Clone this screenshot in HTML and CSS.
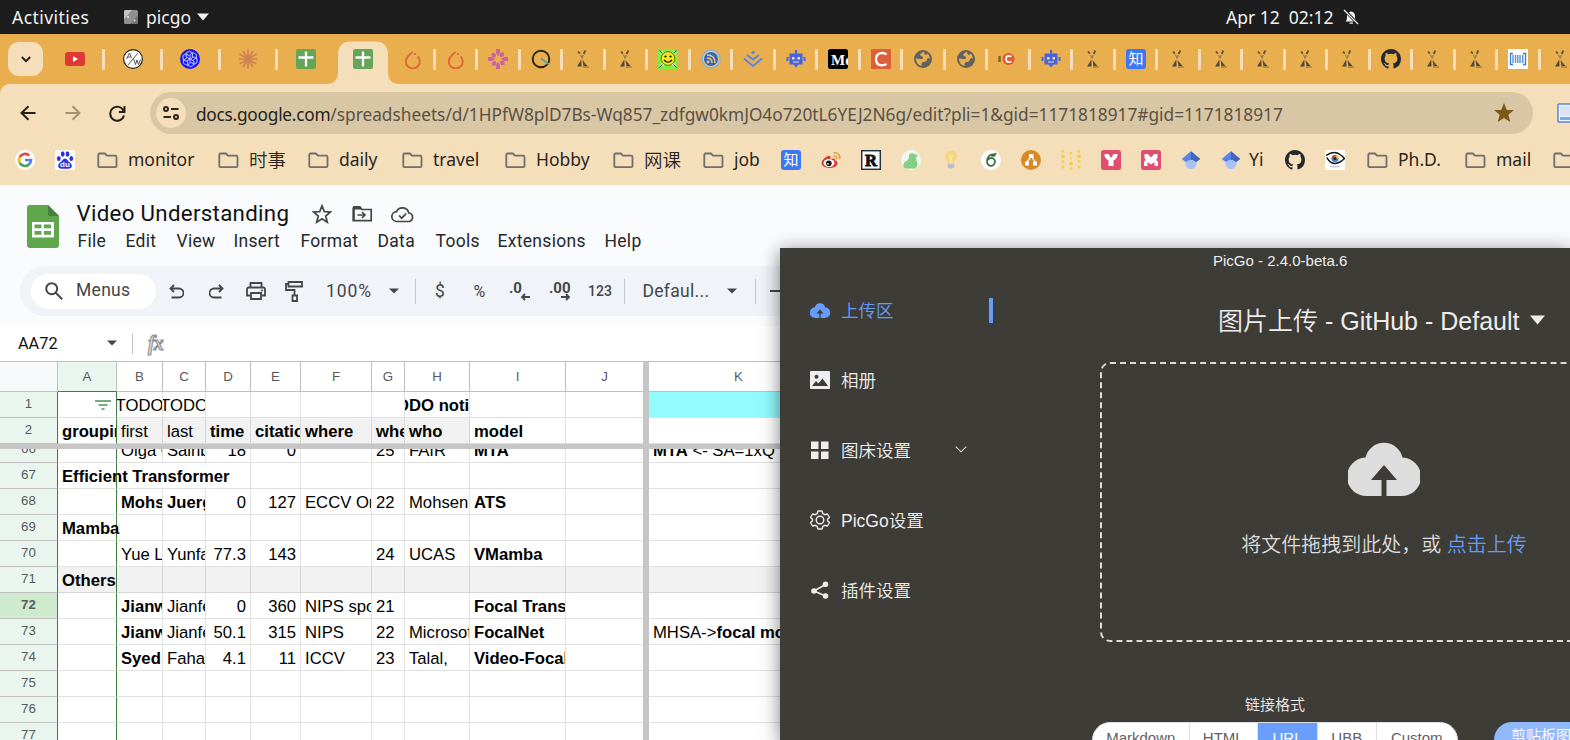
FILE: index.html
```html
<!DOCTYPE html>
<html lang="en">
<head>
<meta charset="utf-8">
<title>Video Understanding - Google Sheets</title>
<link rel="stylesheet" href="styles.css">
</head>
<body>
<svg class="defs" width="0" height="0">
  <symbol id="arxiv" viewBox="0 0 20 20"><path d="M5 2.500l1.800 2.200M12.300 1.500l-1.600 3.500" stroke="#6b5636" stroke-width="1.900"/><path d="M7.500 6l2 3.500M10.300 6l-1.500 3.500" stroke="#8a7650" stroke-width="1.100"/><path d="M8.300 10.500L4 17.500h4.500zM9.500 11l5 6-4 .300z" fill="#4f493e"/><path d="M10 18h6" stroke="#856a3c" stroke-width="1"/></symbol>
  <symbol id="sheet" viewBox="0 0 20 20"><rect width="20" height="20" rx="2" fill="#64a558"/><path d="M10 2.500v15M2.500 8.500h15" stroke="#fff" stroke-width="2.300"/></symbol>
  <symbol id="torch" viewBox="0 0 20 20"><path d="M9.500 2.800L4.800 7.500a7 7 0 1 0 9.900 0" fill="none" stroke="#e0653a" stroke-width="1.900"/><circle cx="12" cy="5" r="1.100" fill="#e0653a"/></symbol>
  <symbol id="globe" viewBox="0 0 20 20"><circle cx="10" cy="10" r="9" fill="#616161"/><path d="M10.500 2.800c-1 1.200-3.500 1.500-3.300 3.200.200 1.500 2.300 1 2.800 2.300.500 1.500-1.300 2.200-3 1.800-1.500-.400-2.500-.700-4-.600a7.200 7.200 0 0 0 5.800 7.600c.200-1.300-.800-2.500.400-3.500 1.500-1.300 4.300-.200 4.600-2.600.200-1.500 1.500-1.800 3.200-1.600-.300-2-1-3.500-2.500-4.900-.500 1.300-2 1.800-2.700 1-.700-.800.400-1.700-1.300-2.700z" fill="#e9af4f"/></symbol>
  <symbol id="robot" viewBox="0 0 20 20"><path d="M9 3V1h2v2zM3.500 4.500h13v11h-4l-2.500 3-2.500-3h-4zM.500 8h2v4h-2zM17.500 8h2v4h-2zM9 3h2v2H9z" fill="#4564e0"/><path d="M6 8h2.500v2.500H6zM11.500 8H14v2.500h-2.500zM7 12.500h6v1H7z" fill="#f6d9a6"/></symbol>
  <symbol id="zhihu" viewBox="0 0 20 20"><rect width="20" height="20" rx="3" fill="#3e77f5"/><text x="10" y="15.200" text-anchor="middle" class="zh">知</text></symbol>
  <symbol id="github" viewBox="0 0 16 16"><path fill="#24292e" d="M8 0C3.580 0 0 3.580 0 8c0 3.540 2.290 6.530 5.470 7.590.400.070.550-.170.550-.380 0-.190-.010-.820-.010-1.490-2.010.370-2.530-.490-2.690-.940-.090-.230-.480-.940-.820-1.130-.280-.150-.680-.520-.010-.530.630-.010 1.080.580 1.230.820.720 1.210 1.870.870 2.330.660.070-.520.280-.870.510-1.070-1.780-.200-3.640-.890-3.640-3.950 0-.870.310-1.590.820-2.150-.080-.200-.360-1.020.080-2.120 0 0 .670-.210 2.200.820a7.600 7.600 0 0 1 4 0c1.530-1.040 2.200-.820 2.200-.820.440 1.100.160 1.920.080 2.120.510.560.820 1.270.820 2.150 0 3.070-1.870 3.750-3.650 3.950.290.250.540.730.540 1.480 0 1.070-.010 1.930-.010 2.200 0 .210.150.460.550.380A8.010 8.010 0 0 0 16 8c0-4.420-3.580-8-8-8z"/></symbol>
  <symbol id="folder" viewBox="0 0 21 17"><path d="M2.500 1.500h5.300l2.200 2.200h8.300q1.200 0 1.200 1.200v9.100q0 1.200-1.200 1.200H2.500q-1.200 0-1.200-1.200V2.700q0-1.200 1.200-1.200z" fill="none" stroke="#6e6e6e" stroke-width="1.800"/></symbol>
  <symbol id="scholar" viewBox="0 0 20 20"><circle cx="10" cy="13.500" r="5.600" fill="#a9c3fa"/><path d="M10 1.300L.800 8.900 5 12q5-4.500 10 0l4.200-3.100z" fill="#5583ec"/><path d="M10 1.300v8.200q3 .200 5 2.500l4.200-3.100z" fill="#4265b8"/></symbol>
  <symbol id="cloudup" viewBox="0 0 72 56"><path fill-rule="evenodd" d="M19 55a19 19 0 0 1-1.500-38.500 19 19 0 0 1 37 0A19 19 0 0 1 53 55H38.500V39H49L36 24 23 39h10.500v16z" fill="currentColor"/></symbol>
  <symbol id="weave" viewBox="0 0 20 20"><rect width="20" height="20" rx="2.500" fill="#e04f6f"/></symbol>
</svg>

<div class="topbar">
  <div class="topbar-left">
    <span class="activities">Activities</span>
    <svg class="app-ic" width="14" height="14"><rect width="14" height="14" rx="1.500" fill="#8f8f8f"/><path d="M0 9L8 0H1.500Q0 0 0 1.500z" fill="#c4c4c4"/><path d="M6 14l8-9v8l-1 1z" fill="#727272"/><circle cx="4" cy="7" r="1" fill="#eee"/><circle cx="10.500" cy="10.500" r="1" fill="#ddd"/></svg>
    <span class="appname">picgo</span>
    <svg width="12" height="8"><path d="M0 .500h12L6 7.500z" fill="#f2f2f2"/></svg>
  </div>
  <span class="clock">Apr 12&nbsp; 02:12</span>
  <svg width="16" height="16" viewBox="0 0 16 16"><path d="M2.500 12.500q1.500-1 1.500-5Q4 3 8 2.500 12 3 12 7.500q0 4 1.500 5zM6.500 13.500h3.500v1.200H6.500z" fill="#f2f2f2"/><path d="M1 .500l14 14.500" stroke="#1d1d1d" stroke-width="3"/><path d="M1 1l14 14" stroke="#f2f2f2" stroke-width="1.300"/></svg>
</div>

<div class="tabstrip">
  <div class="tabsearch"><svg width="10" height="7"><path d="M.800 1l4.200 4.200L9.200 1" fill="none" stroke="#23201a" stroke-width="2"/></svg></div>
  <div class="tab wide"><svg width="20" height="20"><rect y="3" width="20" height="14" rx="3" fill="#dd3835"/><path d="M8 7l5 3-5 3z" fill="#fff"/></svg></div>
  <div class="tab wide"><svg width="20" height="20"><circle cx="10" cy="10" r="9.400" fill="#fff" stroke="#222" stroke-width="1.200"/><path d="M3.500 10l3-6 2 5M4.500 8h3M5 16L14.500 4.500M10.500 9.500l2 6 1.500-4.500 1.500 4.500 2-5" fill="none" stroke="#444" stroke-width=".9"/></svg></div>
  <div class="tab wide"><svg width="20" height="20"><circle cx="10" cy="10" r="10" fill="#1515f5"/><g fill="none" stroke="#dfe3ff" stroke-width=".8"><path id="petal" d="M10 10V5.500l3.200-1.800 3.300 2V9L13 11"/><use href="#petal" transform="rotate(60 10 10)"/><use href="#petal" transform="rotate(120 10 10)"/><use href="#petal" transform="rotate(180 10 10)"/><use href="#petal" transform="rotate(240 10 10)"/><use href="#petal" transform="rotate(300 10 10)"/></g></svg></div>
  <div class="tab wide"><svg width="20" height="20"><g stroke="#d08152" stroke-width="1.700"><path d="M10 .500v19M.500 10h19M5 2l10 16M15 2L5 18M1.500 5l17 10M18.500 5l-17 10"/></g></svg></div>
  <div class="tab wide plain"><svg width="20" height="20"><use href="#sheet"/></svg></div>
  <div class="tab active"><svg class="flare" width="74" height="43" viewBox="0 0 74 43"><path d="M0 43Q12 43 12 31V14Q12 .500 25 .500H49Q62 .500 62 14V31Q62 43 74 43z" fill="#f5dfba"/></svg><svg class="fav" width="20" height="20"><use href="#sheet"/></svg></div>
  <div class="tab"><svg width="20" height="20"><use href="#torch"/></svg></div>
  <div class="tab"><svg width="20" height="20"><use href="#torch"/></svg></div>
  <div class="tab"><svg width="20" height="20"><path id="arm" d="M8 0h4v4l-2 3.200L8 4zM12.500 3.500h3.500v3.500l-3 1.200-1.700-1.700z" fill="#cb63a0"/><use href="#arm" transform="rotate(90 10 10)"/><use href="#arm" transform="rotate(180 10 10)"/><use href="#arm" transform="rotate(270 10 10)"/></svg></div>
  <div class="tab"><svg width="20" height="20"><circle cx="10" cy="10" r="8.300" fill="none" stroke="#2b2418" stroke-width="1.900"/><path d="M10 9.500l8 6" stroke="#57a99a" stroke-width="1.800"/></svg></div>
  <div class="tab"><svg width="20" height="20"><use href="#arxiv"/></svg></div>
  <div class="tab"><svg width="20" height="20"><use href="#arxiv"/></svg></div>
  <div class="tab"><svg width="20" height="20"><rect width="20" height="20" fill="#7df03a"/><path d="M3 3l14 14M17 3L3 17" stroke="#e8f5d8" stroke-width="2.500"/><path d="M1.500 1.500l3 3M18.500 1.500l-3 3M1.500 18.500l3-3M18.500 18.500l-3-3" stroke="#333" stroke-width="1"/><circle cx="10" cy="9.500" r="6.800" fill="#fbe61c" stroke="#4a5a10" stroke-width=".8"/><circle cx="7.500" cy="7.500" r="1.100" fill="#111"/><circle cx="12.500" cy="7.500" r="1.100" fill="#111"/><path d="M6 11q4 4.500 8 0" fill="none" stroke="#111" stroke-width="1.200"/></svg></div>
  <div class="tab"><svg width="20" height="20"><circle cx="10" cy="10" r="9" fill="#ecc684" stroke="#8ab4cf" stroke-width="1.600"/><circle cx="10" cy="10" r="7" fill="#3267b8"/><path d="M6 9q5 0 5 5M6 6q8 0 8 8" fill="none" stroke="#f0c47a" stroke-width="1.500"/><circle cx="7" cy="13" r="1.400" fill="#f0c47a"/></svg></div>
  <div class="tab"><svg width="20" height="20"><path d="M10 1.500l2.200 1.900-2.200 1.900-2.200-1.900z" fill="#5d84e0"/><path d="M4 6l6 4.500L16 6M1 9.500l9 7.500 9-7.500" fill="none" stroke="#5d84e0" stroke-width="2"/></svg></div>
  <div class="tab"><svg width="20" height="20"><use href="#robot"/></svg></div>
  <div class="tab"><svg width="20" height="20"><rect width="20" height="20" rx="2.500" fill="#000"/><text x="3" y="15.500" class="med">Me</text></svg></div>
  <div class="tab"><svg width="20" height="20"><rect width="20" height="20" fill="#dd603b"/><path d="M15.500 5.500Q13.500 3.800 11 3.800 5 4.300 5 10.200 5 16.200 11 16.300q2.500 0 4.500-1.500" fill="none" stroke="#fff" stroke-width="2.300"/></svg></div>
  <div class="tab"><svg width="20" height="20"><use href="#globe"/></svg></div>
  <div class="tab"><svg width="20" height="20"><use href="#globe"/></svg></div>
  <div class="tab"><svg width="20" height="20"><path d="M1.500 7v6" stroke="#8a6420" stroke-width="2.500"/><circle cx="10.500" cy="10" r="6" fill="#de5b38"/><path d="M13.500 7.500Q8 5.500 8 10t5.500 2.500" fill="none" stroke="#fff" stroke-width="1.700"/></svg></div>
  <div class="tab"><svg width="20" height="20"><use href="#robot"/></svg></div>
  <div class="tab"><svg width="20" height="20"><use href="#arxiv"/></svg></div>
  <div class="tab"><svg width="20" height="20"><use href="#zhihu"/></svg></div>
  <div class="tab"><svg width="20" height="20"><use href="#arxiv"/></svg></div>
  <div class="tab"><svg width="20" height="20"><use href="#arxiv"/></svg></div>
  <div class="tab"><svg width="20" height="20"><use href="#arxiv"/></svg></div>
  <div class="tab"><svg width="20" height="20"><use href="#arxiv"/></svg></div>
  <div class="tab"><svg width="20" height="20"><use href="#arxiv"/></svg></div>
  <div class="tab"><svg width="20" height="20"><use href="#github"/></svg></div>
  <div class="tab"><svg width="20" height="20"><use href="#arxiv"/></svg></div>
  <div class="tab"><svg width="20" height="20"><use href="#arxiv"/></svg></div>
  <div class="tab"><svg width="20" height="20"><rect width="20" height="20" fill="#fff"/><path d="M5 4.500H2.500v11H5M15 4.500h2.500v11H15" fill="none" stroke="#3b78d8" stroke-width="1.300"/><path d="M5 6v8M7.500 6v8M9.700 6v8M12 6v8M14.700 6v8" stroke="#5b8fe0" stroke-width="1.400"/></svg></div>
  <div class="tab"><svg width="20" height="20"><use href="#arxiv"/></svg></div>
</div>

<div class="chrome">
  <div class="navbar">
    <svg class="nav" width="16" height="16"><path d="M15.500 8H2M8.500 1.200L1.500 8l7 6.800" fill="none" stroke="#24211c" stroke-width="2"/></svg>
    <svg class="nav fwd" width="16" height="16"><path d="M.500 8H14M7.500 1.200L14.500 8l-7 6.800" fill="none" stroke="#a09177" stroke-width="2"/></svg>
    <svg class="nav rel" width="17" height="17"><path d="M14.700 6A7 7 0 1 0 15 10.500M15.500 1v6H9.800" fill="none" stroke="#24211c" stroke-width="2"/></svg>
    <div class="omnibox">
      <div class="siteinfo"><svg width="16" height="14"><g fill="none" stroke="#2b2620" stroke-width="2"><circle cx="3" cy="3" r="2"/><path d="M8 3h7.500M.500 11H8"/><circle cx="13" cy="11" r="2"/></g></svg></div>
      <div class="url"><b>docs.google.com</b>/spreadsheets/d/1HPfW8plD7Bs-Wq857_zdfgw0kmJO4o720tL6YEJ2N6g/edit?pli=1&amp;gid=1171818917#gid=1171818917</div>
      <svg class="star" width="20" height="20" viewBox="0 0 20 20"><path d="M10 0l2.800 7h7.200l-5.700 4.700 2 7.300L10 15l-6.300 4 2-7.300L0 7h7.200z" fill="#7d5714"/></svg>
    </div>
    <svg class="ext" width="20" height="20"><rect x="1" y="1" width="24" height="18" rx="1" fill="#f2f6fd" stroke="#5a86cc" stroke-width="1.500"/><path d="M3 3h17v10H3z" fill="#d7e4f8"/><path d="M3 14h17v3H3z" fill="#6fb0ea"/></svg>
  </div>
  <div class="bookmarks">
    <div class="bm w40"><svg width="20" height="20"><circle cx="10" cy="10" r="10" fill="#fff"/><g fill="none" stroke-width="2.700"><path d="M14.200 5.600A6 6 0 0 0 4.800 7" stroke="#dc4a3d"/><path d="M4.800 7a6 6 0 0 0 0 6" stroke="#f0b92c"/><path d="M4.800 13a6 6 0 0 0 9 1.600" stroke="#4ba35a"/><path d="M13.800 14.600A6 6 0 0 0 16 10h-6" stroke="#4c83ea"/></g></svg></div>
    <div class="bm w40"><svg width="20" height="20"><rect width="20" height="20" rx="1.500" fill="#fff"/><g fill="#2b33dc"><ellipse cx="3.800" cy="8.500" rx="1.900" ry="2.500"/><ellipse cx="7.700" cy="4" rx="1.900" ry="2.700"/><ellipse cx="12.500" cy="4" rx="1.900" ry="2.700"/><ellipse cx="16.300" cy="8.500" rx="1.900" ry="2.500"/><path d="M10 8.500q2 0 3.500 3 3.500 2.200 3.300 4.500-.300 2.700-3.300 2.700H6.500q-3 0-3.300-2.700Q3 13.700 6.500 11.500 8 8.500 10 8.500z"/></g><text x="10" y="17.200" text-anchor="middle" class="du">du</text></svg></div>
    <div class="bm f" style="width:121px"><svg width="21" height="17"><use href="#folder"/></svg><span>monitor</span></div>
    <div class="bm f cn" style="width:90px"><svg width="21" height="17"><use href="#folder"/></svg><span>时事</span></div>
    <div class="bm f" style="width:94px"><svg width="21" height="17"><use href="#folder"/></svg><span>daily</span></div>
    <div class="bm f" style="width:103px"><svg width="21" height="17"><use href="#folder"/></svg><span>travel</span></div>
    <div class="bm f" style="width:108px"><svg width="21" height="17"><use href="#folder"/></svg><span>Hobby</span></div>
    <div class="bm f cn" style="width:90px"><svg width="21" height="17"><use href="#folder"/></svg><span>网课</span></div>
    <div class="bm f" style="width:80px"><svg width="21" height="17"><use href="#folder"/></svg><span>job</span></div>
    <div class="bm w40"><svg width="20" height="20"><use href="#zhihu"/></svg></div>
    <div class="bm w40"><svg width="20" height="20"><path d="M7 6Q1 9 .500 13q.300 4.500 8 5 8-.500 8-5-.200-2-2.500-2.800.800-2.700-4.500-1.200Q10 5 7 6z" fill="#d8382f"/><ellipse cx="8" cy="13" rx="5.500" ry="4" fill="#fff"/><circle cx="7.800" cy="13.200" r="2.800" fill="#111"/><circle cx="7" cy="13.800" r=".9" fill="#fff"/><path d="M12.500 6q3.500-.500 3 3.500M12.500 2.800q7-.500 6.300 6.500" fill="none" stroke="#e89a2b" stroke-width="1.500"/></svg></div>
    <div class="bm w40"><svg width="20" height="20"><rect x=".7" y=".7" width="18.600" height="18.600" fill="#f7f8fa" stroke="#1e3038" stroke-width="1.400"/><text x="10" y="16" text-anchor="middle" class="rr">R</text></svg></div>
    <div class="bm w40"><svg width="20" height="20"><circle cx="10" cy="10" r="10" fill="#eef7f0"/><path d="M8 4.500q3.500-2.500 6 0l3 .500-2 2.500q0 2.500 1 4.500 1.500 4-2 6.500H5q-3-1-2.500-4 .5-3 3-3.500 3-1.500 2.500-6.500z" fill="#85cf83"/></svg></div>
    <div class="bm w40"><svg width="20" height="20"><circle cx="10" cy="6.500" r="6" fill="#f3d583"/><path d="M6.500 10h7l-.7 4H7.200z" fill="#f3d583"/><path d="M7.500 5l2.500 3 2.500-3M10 8v5" fill="none" stroke="#fff3cd" stroke-width="1"/><path d="M6.700 14h6.600v3.500q-3.300 2-6.600 0z" fill="#b9bec6"/></svg></div>
    <div class="bm w40"><svg width="20" height="20"><circle cx="10" cy="10" r="10" fill="#fff"/><path d="M15.500 3.500q-2.500 1-5 1Q6 6.500 6 11.500a4 4 0 1 0 4.200-3.700Q7.500 8 6.300 10.500M10 5q1 1.500 4.500.500" fill="none" stroke="#3b6b42" stroke-width="1.700"/></svg></div>
    <div class="bm w40"><svg width="20" height="20"><circle cx="10" cy="10" r="10" fill="#d98a26"/><path d="M8 4h4.500v4H8zM4 11.500h4v4H4zM12 11.500h4v4h-4z" fill="#fff"/><path d="M9 8l-3 4M11.500 8l2.700 4" stroke="#fff" stroke-width="1.300"/></svg></div>
    <div class="bm w40"><svg width="20" height="20"><g fill="#f3cf4c"><circle cx="2" cy="1.500" r="1.400"/><circle cx="2" cy="6.500" r="2"/><circle cx="2" cy="11.500" r="1.400"/><circle cx="2" cy="17" r="1.500"/><circle cx="10" cy="3.500" r="1.400"/><circle cx="10" cy="8.500" r="1.200"/><circle cx="10" cy="13.500" r="2"/><circle cx="10" cy="18.500" r="1.300"/><circle cx="18" cy="1.500" r="1.400"/><circle cx="18" cy="6.500" r="2"/><circle cx="18" cy="11.500" r="1.400"/><circle cx="18" cy="17" r="1.500"/></g></svg></div>
    <div class="bm w40"><svg width="20" height="20"><use href="#weave"/><path d="M3.500 4h4l2.500 4 2.500-4h4q.5 4-4 6.500V16h-5v-5.500Q3 8 3.500 4z" fill="#fff"/></svg></div>
    <div class="bm w40"><svg width="20" height="20"><use href="#weave"/><path d="M3.500 4h3.300L10 7.500 13.200 4h3.300v3.500q0 1.800-1.700 2.500 2.200.5 2.200 2.500V16h-3.500v-4L10 14.500 6.500 12v4H3v-3.500Q3 10.500 5.200 10 3.500 9.300 3.500 7.500z" fill="#fff"/></svg></div>
    <div class="bm w40"><svg width="20" height="20"><use href="#scholar"/></svg></div>
    <div class="bm yi" style="width:64px"><svg width="20" height="20"><use href="#scholar"/></svg><span>Yi</span></div>
    <div class="bm w40"><svg width="20" height="20"><use href="#github"/></svg></div>
    <div class="bm w40"><svg width="20" height="20"><rect width="20" height="20" fill="#fff"/><ellipse cx="10" cy="16.500" rx="6" ry="1" fill="#cfd0dc"/><path d="M1 5.500Q9 0 15 4.500q3 2 4.500 4Q15 13 10 13.500 4 13 2 7.500" fill="none" stroke="#111" stroke-width="1.500"/><circle cx="10" cy="8.500" r="3.600" fill="#3f7fd0"/><path d="M10 8.500L7 6.500a3.600 3.600 0 0 1 4-1.500z" fill="#e0482c"/><path d="M10 8.500l1-3.500a3.600 3.600 0 0 1 2.500 4z" fill="#f2c029"/><circle cx="10" cy="8.500" r="1.500" fill="#222"/></svg></div>
    <div class="bm f" style="width:98px"><svg width="21" height="17"><use href="#folder"/></svg><span>Ph.D.</span></div>
    <div class="bm f" style="width:88px"><svg width="21" height="17"><use href="#folder"/></svg><span>mail</span></div>
    <div class="bm f" style="width:40px"><svg width="21" height="17"><use href="#folder"/></svg></div>
  </div>
</div>

<div class="docs">
  <div class="dochead">
    <svg class="logo" width="32" height="43"><path d="M3 0h18l11 11v29q0 3-3 3H3q-3 0-3-3V3q0-3 3-3z" fill="#5fa64c"/><path d="M21 0l11 11H23q-2 0-2-2z" fill="#46803a"/><path fill-rule="evenodd" d="M5 17h22v15.500H5zM7.500 19.500v3.800h7v-3.800zM17 19.500v3.800h7v-3.800zM7.500 26v3.800h7V26zM17 26v3.800h7V26z" fill="#fff"/></svg>
    <div class="headtext">
      <div class="titlerow">
        <span class="title">Video Understanding</span>
        <svg class="t1" width="20" height="20" viewBox="0 0 20 20"><path d="M10 1.800l2.300 5.800 6.100.400-4.700 4 1.600 6.200L10 14.700l-5.300 3.500 1.600-6.200-4.700-4 6.100-.400z" fill="none" stroke="#444746" stroke-width="1.700"/></svg>
        <svg class="t2" width="21" height="16"><path d="M2 14V1.200h6L10 3.500h9.200V14.700H1.200V1.500" fill="none" stroke="#444746" stroke-width="1.700"/><path d="M1 0h7l2 3.500H1z" fill="#444746"/><path d="M5.500 9h7M10 6l3 3-3 3" fill="none" stroke="#444746" stroke-width="1.700"/></svg>
        <svg class="t3" width="24" height="17"><path d="M6 15.500a4.900 4.900 0 0 1-.500-9.800A6.500 6.500 0 0 1 17.800 7 4.300 4.300 0 0 1 18 15.500z" fill="none" stroke="#444746" stroke-width="1.700"/><path d="M8 9.500l2.700 2.700 4.600-4.700" fill="none" stroke="#444746" stroke-width="1.700"/></svg>
      </div>
      <div class="menurow"><span style="width:48px">File</span><span style="width:51px">Edit</span><span style="width:57px">View</span><span style="width:67px">Insert</span><span style="width:77px">Format</span><span style="width:58px">Data</span><span style="width:62px">Tools</span><span style="width:107px">Extensions</span><span>Help</span></div>
    </div>
  </div>
  <div class="tools">
    <div class="search"><svg width="18" height="18"><circle cx="6.700" cy="6.700" r="5.500" fill="none" stroke="#444746" stroke-width="2"/><path d="M10.700 10.700l6.500 6.500" stroke="#444746" stroke-width="2"/></svg><span>Menus</span></div>
    <svg style="margin-left:13px" width="15" height="15"><path d="M5 1L1.500 4.500 5 8M2 4.500h8a4.500 4.500 0 0 1 0 9H2.500" fill="none" stroke="#444746" stroke-width="1.800"/></svg>
    <svg style="margin-left:25px" width="15" height="15"><path d="M10 1l3.500 3.500L10 8M13 4.500H5a4.500 4.500 0 0 0 0 9h7.500" fill="none" stroke="#444746" stroke-width="1.800"/></svg>
    <svg style="margin-left:22px" width="20" height="18"><path d="M4.500 5V1h11v4M4 13.500H1V7.500Q1 5.500 3 5.500h14q2 0 2 2v6h-3M5 11h10v6H5z" fill="none" stroke="#444746" stroke-width="1.800"/><circle cx="16" cy="8.500" r="1" fill="#444746"/></svg>
    <svg style="margin-left:19px" width="18" height="21"><path d="M3.500 1h13.500v4.500H3.500zM3.500 3H1v6h8.500v6M7.500 14.500h4.500v5.500H7.500z" fill="none" stroke="#444746" stroke-width="1.800"/></svg>
    <span class="zoom">100%</span><svg class="caret" width="10" height="6"><path d="M0 .500h10L5 5.500z" fill="#444746"/></svg>
    <i class="sep" style="margin-left:16px"></i>
    <span class="cur">$</span><span class="pct">%</span>
    <svg style="margin-left:21px" width="21" height="21"><text x="-1" y="12" class="dec">.0</text><path d="M20 16h-8M15 13l-3 3 3 3" fill="none" stroke="#444746" stroke-width="1.800"/></svg>
    <svg style="margin-left:19px" width="22" height="21"><text x="-1" y="12" class="dec">.00</text><path d="M11 16h8M16 13l3 3-3 3" fill="none" stroke="#444746" stroke-width="1.800"/></svg>
    <span class="n123">123</span>
    <i class="sep"></i>
    <span class="font">Defaul...</span><svg width="10" height="6"><path d="M0 .500h10L5 5.500z" fill="#444746"/></svg>
    <i class="sep" style="margin-left:18px"></i>
    <svg style="margin-left:14px" width="15" height="2"><path d="M0 1h15" stroke="#444746" stroke-width="2"/></svg>
  </div>
  <div class="fxbar">
    <span class="ref">AA72</span><svg width="10" height="6"><path d="M0 .500h10L5 5.500z" fill="#444746"/></svg><i class="sep2"></i><span class="fx">fx</span>
  </div>
  <div class="sheet">
    <div class="row head"><s class="corner"></s><s class="sel">A</s><s>B</s><s>C</s><s>D</s><s>E</s><s>F</s><s>G</s><s>H</s><s>I</s><s class="j">J</s><s class="bar"></s><s>K</s></div>
    <div class="row top"><s class="n">1</s><s class="a filt"><svg width="16" height="10"><path d="M0 1h16M3.500 5h9M6.500 9h3" stroke="#4f9154" stroke-width="1.500"/></svg></s><s class="c">TODO</s><s class="c">TODO</s><s></s><s></s><s></s><s></s><s class="c b">TODO notice</s><s></s><s class="j"></s><s class="bar"></s><s class="cyan"></s></div>
    <div class="row hd2"><s class="n">2</s><s class="a b">grouping</s><s class="g">first</s><s class="g">last</s><s class="g b">time</s><s class="g b">citation</s><s class="g b">where</s><s class="g b">when</s><s class="g b">who</s><s class="b">model</s><s class="j"></s><s class="bar"></s><s></s></div>
    <div class="freeze"></div>
    <div class="row part"><s class="n">66</s><s class="a"></s><s>Olga O</s><s>Sainbayar</s><s class="r">18</s><s class="r">0</s><s></s><s>25</s><s>FAIR</s><s class="b">MTA</s><s class="j"></s><s class="bar"></s><s><b>MTA</b> &lt;- SA=1xQ + V</s></div>
    <div class="row"><s class="n">67</s><s class="a b over">Efficient Transformer</s><s class="nb"></s><s class="nb"></s><s></s><s></s><s></s><s></s><s></s><s></s><s class="j"></s><s class="bar"></s><s></s></div>
    <div class="row"><s class="n">68</s><s class="a"></s><s class="b">Mohsen</s><s class="b">Juergen</s><s class="r">0</s><s class="r">127</s><s>ECCV Oral</s><s>22</s><s>Mohsen</s><s class="b">ATS</s><s class="j"></s><s class="bar"></s><s></s></div>
    <div class="row"><s class="n">69</s><s class="a b over">Mamba</s><s></s><s></s><s></s><s></s><s></s><s></s><s></s><s></s><s class="j"></s><s class="bar"></s><s></s></div>
    <div class="row"><s class="n">70</s><s class="a"></s><s>Yue Liu</s><s>Yunfan</s><s class="r">77.3</s><s class="r">143</s><s></s><s>24</s><s>UCAS</s><s class="b">VMamba</s><s class="j"></s><s class="bar"></s><s></s></div>
    <div class="row gray"><s class="n">71</s><s class="a b">Others</s><s></s><s></s><s></s><s></s><s></s><s></s><s></s><s></s><s class="j"></s><s class="bar"></s><s></s></div>
    <div class="row"><s class="n cur72">72</s><s class="a"></s><s class="b">Jianwei</s><s>Jianfeng</s><s class="r">0</s><s class="r">360</s><s>NIPS spotlight</s><s>21</s><s></s><s class="b">Focal Transformer</s><s class="j"></s><s class="bar"></s><s></s></div>
    <div class="row"><s class="n">73</s><s class="a"></s><s class="b">Jianwei</s><s>Jianfeng</s><s class="r">50.1</s><s class="r">315</s><s>NIPS</s><s>22</s><s>Microsoft</s><s class="b">FocalNet</s><s class="j"></s><s class="bar"></s><s>MHSA-&gt;<b>focal modulation</b></s></div>
    <div class="row"><s class="n">74</s><s class="a"></s><s class="b">Syed</s><s>Fahad</s><s class="r">4.1</s><s class="r">11</s><s>ICCV</s><s>23</s><s>Talal,</s><s class="b">Video-FocalNet</s><s class="j"></s><s class="bar"></s><s></s></div>
    <div class="row"><s class="n">75</s><s class="a"></s><s></s><s></s><s></s><s></s><s></s><s></s><s></s><s></s><s class="j"></s><s class="bar"></s><s></s></div>
    <div class="row"><s class="n">76</s><s class="a"></s><s></s><s></s><s></s><s></s><s></s><s></s><s></s><s></s><s class="j"></s><s class="bar"></s><s></s></div>
    <div class="row"><s class="n">77</s><s class="a"></s><s></s><s></s><s></s><s></s><s></s><s></s><s></s><s></s><s class="j"></s><s class="bar"></s><s></s></div>
  </div>
</div>

<div class="picgo">
  <div class="pg-title">PicGo - 2.4.0-beta.6</div>
  <div class="pg-body">
    <div class="pg-menu">
      <div class="mi on"><svg width="20" height="20" viewBox="0 0 20 20"><svg y="2.500" width="20" height="16"><use href="#cloudup"/></svg></svg><span>上传区</span><i></i></div>
      <div class="mi"><svg width="20" height="20"><path fill-rule="evenodd" d="M1 1h18q1 0 1 1v16q0 1-1 1H1q-1 0-1-1V2q0-1 1-1zM2 16h16l-5.500-7.500-4 5L6 11zM6.500 4.700a2 2 0 1 0 .01 0z" fill="#eee"/></svg><span>相册</span></div>
      <div class="mi"><svg width="20" height="20"><path d="M1 1.500h7.500V9H1zM11 1.500h7.500V9H11zM1 11.500h7.500V19H1zM11 11.500h7.500V19H11z" fill="#eee"/></svg><span>图床设置</span><svg class="chev" width="12" height="7"><path d="M.700.700L6 5.800 11.300.700" fill="none" stroke="#ddd" stroke-width="1.100"/></svg></div>
      <div class="mi"><svg width="20" height="20"><path d="M8 1h4l.8 2.600 2 1.100L17.500 4l2 3.500-2 1.700v1.600l2 1.700-2 3.500-2.700-.700-2 1.100L12 19H8l-.8-2.600-2-1.100L2.500 16l-2-3.500 2-1.700V9.200l-2-1.700 2-3.500 2.700.700 2-1.100z" fill="none" stroke="#eee" stroke-width="1.400" stroke-linejoin="round"/><circle cx="10" cy="10" r="3.800" fill="none" stroke="#eee" stroke-width="1.400"/></svg><span>PicGo设置</span></div>
      <div class="mi"><svg width="20" height="20"><path d="M4 11L15.500 4.500M4 11l11.500 5" stroke="#eee" stroke-width="1.500"/><g fill="#eee"><circle cx="4" cy="11" r="2.800"/><circle cx="15.500" cy="4.200" r="2.800"/><circle cx="15.500" cy="16" r="2.800"/></g></svg><span>插件设置</span></div>
    </div>
    <div class="pg-main">
      <div class="pg-h"><span>图片上传 - GitHub - Default</span><svg width="15" height="10"><path d="M0 .500h15L7.500 9.500z" fill="#eee"/></svg></div>
      <div class="drop">
        <svg width="72" height="56"><use href="#cloudup"/></svg>
        <div class="hint">将文件拖拽到此处，或 <em>点击上传</em></div>
      </div>
      <div class="fmt">链接格式</div>
      <div class="btns"><div class="seg"><span style="width:96.500px">Markdown</span><span style="width:68.500px">HTML</span><span class="act" style="width:60px">URL</span><span style="width:58.500px">UBB</span><span style="width:81.500px">Custom</span></div><div class="clip">剪贴板图片</div></div>
    </div>
  </div>
</div>
</body>
</html>
```
FILE: styles.css
```css
* { box-sizing: border-box; }
body { margin: 0; width: 1570px; height: 740px; overflow: hidden; position: relative; background: #f9fbfd; }
svg { display: block; flex: none; }
.defs { position: absolute; }
span { white-space: nowrap; flex: none; }

.topbar { height: 34px; background: #1d1d1d; color: #f2f2f2; display: flex; align-items: center; font: 17.5px "Noto Sans", sans-serif; border-bottom: 1px solid #161616; }
.topbar-left { width: 1226px; padding-left: 12px; display: flex; align-items: center; }
.activities { width: 112px; letter-spacing: .45px; }
.appname { width: 51px; margin-left: 8px; }
.clock { width: 117px; }

.tabstrip { height: 50px; background: #e9af4f; display: flex; align-items: center; overflow: hidden; padding-left: 8px; }
.tabsearch { width: 35px; height: 34px; margin-right: 3px; border-radius: 11px; background: #f5dfba; display: flex; align-items: center; justify-content: center; flex: none; }
.tab { width: 42.500px; height: 50px; flex: none; display: flex; align-items: center; justify-content: center; position: relative; }
.tab::after { content: ""; position: absolute; right: -1.500px; top: 15px; width: 3px; height: 21px; border-radius: 1px; background: #f5dfba; }
.tab.wide { width: 57.700px; }
.tab.plain::after, .tab.active::after { display: none; }
.tab.active { width: 57.500px; z-index: 1; }
.flare { position: absolute; left: -8.500px; top: 7px; }
.fav { position: relative; }
.zh { font: 15px "Noto Sans CJK SC", sans-serif; fill: #fff; }
.med { font: bold 15px "Liberation Serif", serif; fill: #fff; }
.du { font: bold 8px "Liberation Sans", sans-serif; fill: #fff; }
.rr { font: bold 16.500px "Liberation Serif", serif; fill: #111; stroke: #111; stroke-width: .8px; }

.chrome { height: 101px; background: radial-gradient(circle at 10px 10px, #f5dfba 9.500px, #e9af4f 10.500px) 0 0 / 10px 10px no-repeat #f5dfba; }
.navbar { display: flex; align-items: center; height: 58px; padding-left: 20px; overflow: hidden; }
.fwd { margin-left: 28.500px; }
.rel { margin-left: 28.500px; }
.omnibox { margin-left: 24px; width: 1383px; height: 42px; border-radius: 21px; background: #d8c6a5; display: flex; align-items: center; flex: none; }
.siteinfo { width: 30px; height: 30px; border-radius: 50%; background: #f5dfba; margin-left: 6px; display: flex; align-items: center; justify-content: center; }
.url { margin-left: 10px; padding-top: 2px; width: 1297px; font: 17.280px "Noto Sans", sans-serif; color: #5a5143; white-space: nowrap; flex: none; }
.url b { font-weight: normal; color: #241f18; letter-spacing: -.25px; }
.ext { margin-left: 24px; }
.star { margin-left: 1px; }
.bookmarks { display: flex; height: 36px; align-items: center; padding-left: 15px; font: 17.500px "Noto Sans", "Noto Sans CJK SC", sans-serif; color: #29251e; overflow: hidden; }
.bookmarks span { margin-top: -2px; }
.bm { display: flex; align-items: center; flex: none; }
.w40 { width: 40px; }
.f svg { margin-left: 2px; margin-right: 10px; }
.yi svg { margin-right: 8px; }
.cn { font: 18.500px "Noto Sans CJK SC", sans-serif; font-weight: 350; }

.docs { height: 555px; overflow: hidden; }
.dochead { display: flex; height: 81px; padding: 20px 0 0 26.500px; }
.headtext { margin-left: 18px; }
.titlerow { display: flex; align-items: center; height: 18px; }
.title { width: 235px; font: 22.300px Roboto, sans-serif; letter-spacing: .3px; color: #111; margin-top: -3px; }
.t2 { margin-left: 20px; }
.t3 { margin-left: 18px; }
.menurow { display: flex; margin-top: 6px; font: 17.500px/24px Roboto, sans-serif; color: #26282a; letter-spacing: .3px; }
.menurow span { padding-left: 1px; }
.tools { margin-left: 20px; width: 1550px; height: 50px; border-radius: 25px 0 0 25px; background: #f0f3f8; display: flex; align-items: center; color: #444746; font: 17.500px Roboto, sans-serif; padding-left: 11px; }
.search { width: 125px; height: 35px; border-radius: 18px; background: #fff; display: flex; align-items: center; padding-left: 14px; flex: none; }
.search span { margin-left: 13px; margin-top: -2px; letter-spacing: .3px; }
.zoom { margin-left: 23px; width: 63px; letter-spacing: .9px; }
.sep { width: 1px; height: 25px; background: #c7c7c7; flex: none; }
.cur { margin-left: 19px; width: 38.500px; }
.pct { width: 15px; font-size: 16px; }
.dec { font: bold 15px Roboto, sans-serif; fill: #444746; }
.n123 { margin-left: 16.500px; width: 35.500px; font-size: 14px; font-weight: 500; }
.font { margin-left: 18px; width: 84px; letter-spacing: .3px; margin-top: -1px; }
.fxbar { margin-top: 9.500px; height: 35.500px; background: #fff; display: flex; align-items: center; padding-left: 18px; }
.ref { width: 89px; font: 16.300px Roboto, sans-serif; color: #111; }
.sep2 { width: 1px; height: 21px; background: #c7c7c7; margin-left: 15px; }
.fx { margin-left: 15px; margin-top: 1px; font: italic bold 20px "Liberation Serif", serif; color: #ddd; -webkit-text-stroke: 1px #8a8a8a; letter-spacing: -1px; }

.sheet { background: #fff; border-top: 1px solid #c0c0c0; font: 16.670px/27px "Liberation Sans", Arial, sans-serif; color: #000; }
.row { display: grid; grid-template-columns: 58px 59px 46px 43px 45px 50px 71px 33px 65px 96px 77px 6px 180px; grid-auto-rows: 26px; width: 829px; }
.row s { text-decoration: none; border-right: 1px solid #e1e1e1; border-bottom: 1px solid #e1e1e1; overflow: hidden; white-space: nowrap; padding-left: 4px; display: block; height: 26px; }
.row s.j { border-right: 0; }
.row s.bar { background: #c6c6c6; border: 0; padding: 0; }
.row.head { grid-auto-rows: 30px; }
.row.head s { height: 30px; padding: 0; text-align: center; font-size: 13.300px; line-height: 29px; color: #575a5e; border-color: #c0c0c0; }
.row.head .corner { background: #f8f9fb; }
.row.head .sel { background: #eaf6ed; border-bottom-color: #3f7d41; }
.row s.n { background: #eaf6ed; text-align: center; padding: 0; font-size: 13.300px; line-height: 23px; color: #575a5e; border-bottom-color: #c0c0c0; border-right-color: #3f7d41; }
.row s.a { border-right-color: #3f7d41; }
.row s.cur72 { background: #d0eacf; font-weight: bold; }
.row s.b { font-weight: bold; }
.row s.r { text-align: right; padding-right: 4px; }
.row s.c { display: flex; justify-content: center; padding: 0; }
.row s.g, .row.gray s:not(.n):not(.bar) { background: #f2f2f2; border-color: #d6d6d6; }
.row.gray s.a.a { border-right-color: #3f7d41; }
.row s.over { overflow: visible; position: relative; }
.row s.nb { border-right-color: transparent; }
.row s.filt { padding: 8px 0 0 37px; }
.row s.cyan { background: #93fbfe; }
.freeze { height: 5px; background: #c6c6c6; width: 829px; }
.row.part { height: 14px; overflow: hidden; align-content: end; }

.picgo { position: absolute; left: 780px; top: 248px; width: 790px; height: 492px; background: #3e3c37; box-shadow: 0 3px 18px rgba(0,0,0,.5); color: #eee; font-family: "Liberation Sans", "Noto Sans CJK SC", sans-serif; }
.pg-title { height: 28px; padding-left: 433px; font-size: 15px; line-height: 26px; }
.pg-body { display: flex; height: 464px; overflow: hidden; font-weight: 350; }
.pg-menu { width: 220px; margin-top: -1px; flex: none; }
.mi { height: 70px; display: flex; align-items: center; padding-left: 30px; font: 350 17.500px "Liberation Sans", "Noto Sans CJK SC", sans-serif; }
.mi span { margin-left: 11px; margin-top: -2px; }
.mi.on { color: #669cfb; }
.mi i { width: 4px; height: 25px; background: #669cfb; margin-left: 95.500px; }
.chev { margin-left: 44px; margin-top: -1px; }
.pg-main { width: 568px; margin-left: 100px; display: flex; flex-direction: column; flex: none; }
.pg-main > div { flex: none; }
.pg-h { height: 86px; padding-left: 118px; display: flex; align-items: center; gap: 10.500px; font-size: 25px; }
.pg-h svg { margin-top: 1px; }
.drop { height: 280px; border: 2px dashed #ddd; border-radius: 10px; display: flex; flex-direction: column; align-items: center; padding-top: 77px; color: #ddd; }
.hint { margin-top: 33px; font-size: 20px; line-height: 30px; }
.hint em { font-style: normal; color: #669cfb; }
.fmt { margin: 52px 0 0 145px; font-size: 15px; line-height: 22px; }
.btns { margin: 6px 0 0 -8px; display: flex; }
.seg { display: flex; height: 36px; border-radius: 18px; background: #fff; overflow: hidden; flex: none; border: 1px solid #dcdfe6; width: 366px; }
.seg span { font-size: 15px; line-height: 29px; text-align: center; color: #606266; border-right: 1px solid #dcdfe6; }
.seg .act { background: #699ffb; color: #fff; }
.clip { margin-left: 36px; flex: none; width: 120px; height: 36px; border-radius: 18px; background: #92b8fc; color: #fff; font-size: 15px; line-height: 28px; padding-left: 17px; }
```
